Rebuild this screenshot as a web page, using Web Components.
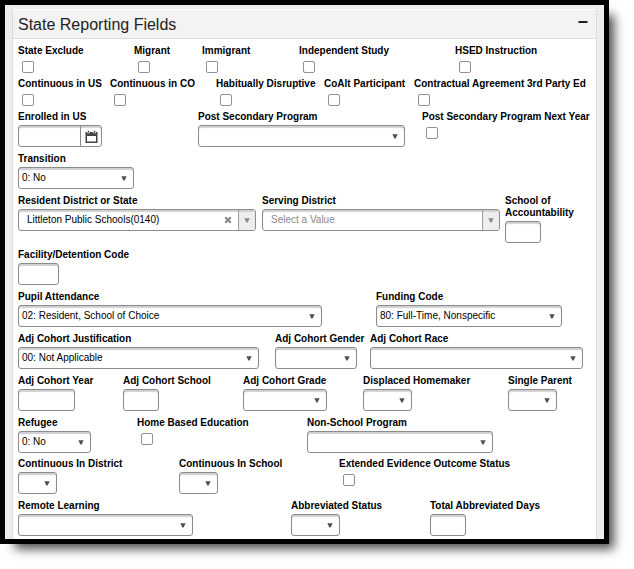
<!DOCTYPE html>
<html lang="en">
<head>
<meta charset="utf-8">
<title>State Reporting Fields</title>
<style>
  body {
    margin: 0;
    background: #fff;
    color: #000;
    font: 10px/12px "Liberation Sans", Arial, sans-serif;
  }
</style>
</head>
<body>
<page-frame>
  <section-panel>
    <span slot="title">State Reporting Fields</span>

    <field-row columns="116 68 97 156 136" compact>
      <form-field kind="check">State Exclude</form-field>
      <form-field kind="check">Migrant</form-field>
      <form-field kind="check">Immigrant</form-field>
      <form-field kind="check">Independent Study</form-field>
      <form-field kind="check">HSED Instruction</form-field>
    </field-row>

    <field-row columns="92 106 108 90 177" compact>
      <form-field kind="check">Continuous in US</form-field>
      <form-field kind="check">Continuous in CO</form-field>
      <form-field kind="check">Habitually Disruptive</form-field>
      <form-field kind="check">CoAlt Participant</form-field>
      <form-field kind="check">Contractual Agreement 3rd Party Ed</form-field>
    </field-row>

    <field-row columns="180 224 169">
      <form-field kind="date" width="84">Enrolled in US</form-field>
      <form-field kind="select" width="207">Post Secondary Program</form-field>
      <form-field kind="check">Post Secondary Program Next Year</form-field>
    </field-row>

    <field-row columns="573">
      <form-field kind="select" width="116" value="0: No">Transition</form-field>
    </field-row>

    <field-row columns="244 243 86">
      <form-field kind="combo" width="238" value="Littleton Public Schools(0140)">Resident District or State</form-field>
      <form-field kind="combo" width="238" placeholder="Select a Value">Serving District</form-field>
      <form-field kind="text" width="36">School of Accountability</form-field>
    </field-row>

    <field-row columns="573">
      <form-field kind="text" width="41">Facility/Detention Code</form-field>
    </field-row>

    <field-row columns="358 215">
      <form-field kind="select" width="304" value="02: Resident, School of Choice">Pupil Attendance</form-field>
      <form-field kind="select" width="186" value="80: Full-Time, Nonspecific">Funding Code</form-field>
    </field-row>

    <field-row columns="257 95 221">
      <form-field kind="select" width="241" value="00: Not Applicable">Adj Cohort Justification</form-field>
      <form-field kind="select" width="82">Adj Cohort Gender</form-field>
      <form-field kind="select" width="213">Adj Cohort Race</form-field>
    </field-row>

    <field-row columns="105 120 120 145 83">
      <form-field kind="text" width="57">Adj Cohort Year</form-field>
      <form-field kind="text" width="36">Adj Cohort School</form-field>
      <form-field kind="select" width="84">Adj Cohort Grade</form-field>
      <form-field kind="select" width="49">Displaced Homemaker</form-field>
      <form-field kind="select" width="49">Single Parent</form-field>
    </field-row>

    <field-row columns="119 170 284" compact>
      <form-field kind="select" width="73" value="0: No">Refugee</form-field>
      <form-field kind="check">Home Based Education</form-field>
      <form-field kind="select" width="186">Non-School Program</form-field>
    </field-row>

    <field-row columns="161 160 252">
      <form-field kind="select" width="39">Continuous In District</form-field>
      <form-field kind="select" width="39">Continuous In School</form-field>
      <form-field kind="check">Extended Evidence Outcome Status</form-field>
    </field-row>

    <field-row columns="273 139 161">
      <form-field kind="select" width="175">Remote Learning</form-field>
      <form-field kind="select" width="49">Abbreviated Status</form-field>
      <form-field kind="text" width="36">Total Abbreviated Days</form-field>
    </field-row>
  </section-panel>
</page-frame>

<script>
  class PageFrame extends HTMLElement {
    constructor() {
      super();
      this.attachShadow({ mode: "open" }).innerHTML = `
        <style>
          :host {
            display: block;
            margin: 0 25px 25px 0;
            padding: 4px 7px 0;
            border: 5px solid #000;
            background: #ededed;
            box-shadow: 10px 10px 10px -5px rgba(0, 0, 0, .7);
          }
        </style>
        <slot></slot>`;
    }
  }

  class SectionPanel extends HTMLElement {
    constructor() {
      super();
      this.attachShadow({ mode: "open" }).innerHTML = `
        <style>
          :host {
            display: block;
            border: 1px solid #dcdcdc;
            border-top-color: #fff;
            border-bottom: 0;
            border-radius: 3px 3px 0 0;
            background: #fff;
          }
          header {
            display: flex;
            align-items: flex-end;
            justify-content: space-between;
            height: 28px;
            padding: 0 8px 0 5px;
            border-bottom: 1px solid #dcdcdc;
            border-radius: 3px 3px 0 0;
            background: #f3f3f3;
          }
          h2 { margin: 0; font-size: 16px; line-height: 26px; font-weight: 400; color: #222; }
          button {
            display: flex;
            align-self: flex-start;
            padding: 10px 0;
            border: 0;
            background: none;
          }
          .body { padding: 6px 5px 0; }
          .body[hidden] { display: none; }
          ::slotted(field-row:last-child) { padding-bottom: 3px; }
        </style>
        <header>
          <h2><slot name="title"></slot></h2>
          <button type="button" aria-label="Collapse section" aria-expanded="true">
            <svg width="10" height="4" viewBox="0 0 10 4" aria-hidden="true"><path d="M0.5 1h9v2h-9z" fill="#222"/></svg>
          </button>
        </header>
        <div class="body"><slot></slot></div>`;
      const button = this.shadowRoot.querySelector("button");
      const body = this.shadowRoot.querySelector(".body");
      button.addEventListener("click", () => {
        body.hidden = !body.hidden;
        button.setAttribute("aria-expanded", String(!body.hidden));
      });
    }
  }

  class FieldRow extends HTMLElement {
    constructor() {
      super();
      this.attachShadow({ mode: "open" }).innerHTML = `
        <style>
          :host { display: grid; align-items: start; padding-bottom: 6px; }
          :host([compact]) { padding-bottom: 5px; }
        </style>
        <slot></slot>`;
    }
    connectedCallback() {
      this.style.gridTemplateColumns = this.getAttribute("columns")
        .split(" ").map(n => `minmax(0, ${n}fr)`).join(" ");
    }
  }

  const ARROW = `<svg class="arrow" width="6" height="5" viewBox="0 0 6 5" aria-hidden="true"><path d="M0.3 0.3h5.4L3.6 4.5H2.4z" fill="currentColor"/></svg>`;
  const CROSS = `<svg width="8" height="8" viewBox="0 0 8 8" aria-hidden="true"><path d="M1.2 1.2l5.6 5.6M6.8 1.2L1.2 6.8" stroke="#888" stroke-width="2"/></svg>`;
  const CALENDAR = `<svg width="13" height="13" viewBox="0 0 13 13" aria-hidden="true"><path d="M0.5 2h12v11h-12zM2 6v5.5h9V6z" fill="#444" fill-rule="evenodd"/><path d="M2.5 0.5h2v2.5h-2zM8.5 0.5h2v2.5h-2z" fill="#444" stroke="#fff" stroke-width=".6"/></svg>`;

  class FormField extends HTMLElement {
    constructor() {
      super();
      this.attachShadow({ mode: "open" });
    }
    connectedCallback() {
      const kind = this.getAttribute("kind");
      const value = this.getAttribute("value") || "";
      const hint = this.getAttribute("placeholder") || "";
      const controls = {
        check: () => `<input id="c" type="checkbox">`,
        text: () => `<div class="box"><input id="c" type="text"></div>`,
        select: () => `<div class="box select"><select id="c"><option>${value}</option></select>${ARROW}</div>`,
        date: () => `<div class="box"><input id="c" type="text"><button type="button" class="cal" aria-label="Open calendar">${CALENDAR}</button></div>`,
        combo: () => `<div class="box combo"><input id="c" type="text" role="combobox" aria-expanded="false" value="${value}" placeholder="${hint}">${
          value ? `<button type="button" class="clear" aria-label="Clear">${CROSS}</button>` : ""
        }<button type="button" class="toggle" aria-label="Show options">${ARROW}</button></div>`
      };
      this.shadowRoot.innerHTML = `
        <style>
          :host { display: flex; flex-direction: column; align-items: flex-start; gap: 2px; }
          :host([kind="check"]) { gap: 4px; }
          label { font-weight: 700; }
          .box {
            display: flex;
            box-sizing: border-box;
            width: ${this.getAttribute("width") || 0}px;
            max-width: 100%;
            height: 22px;
            border: 1px solid #8c8c8c;
            border-radius: 3px;
            background: #fff;
            box-shadow: inset 0 2px 1px #d0d0d0;
            overflow: hidden;
          }
          .box input, select {
            flex: 1;
            min-width: 0;
            margin: 0;
            padding: 0 3px;
            border: 0;
            background: none;
            color: #000;
            font: inherit;
            appearance: none;
          }
          .combo input { padding: 0 8px; }
          .combo input::placeholder { color: #888; opacity: 1; }
          .select { display: grid; align-items: center; }
          .select > * { grid-area: 1 / 1; }
          select { width: 100%; height: 20px; }
          .arrow { display: block; color: #505050; }
          .select .arrow { justify-self: end; margin-right: 6px; pointer-events: none; }
          button {
            display: flex;
            align-items: center;
            justify-content: center;
            padding: 0;
            border: 0;
            background: none;
          }
          .cal { width: 21px; border-left: 1px solid #8c8c8c; }
          .clear { width: 21px; }
          .toggle { width: 17px; border-left: 1px solid #a0a0a0; background: #eee; box-shadow: inset 0 2px 1px #d0d0d0; }
          .toggle .arrow { color: #888; }
          input[type="checkbox"] {
            appearance: none;
            width: 12px;
            height: 12px;
            margin: 0 0 0 4px;
            border: 1px solid #8f8f9d;
            border-radius: 2px;
            background: #fff;
          }
          input[type="checkbox"]:checked { background: #0060df; }
        </style>
        <label for="c"><slot></slot></label>
        ${controls[kind]()}`;
    }
  }

  customElements.define("page-frame", PageFrame);
  customElements.define("section-panel", SectionPanel);
  customElements.define("field-row", FieldRow);
  customElements.define("form-field", FormField);
</script>
</body>
</html>
